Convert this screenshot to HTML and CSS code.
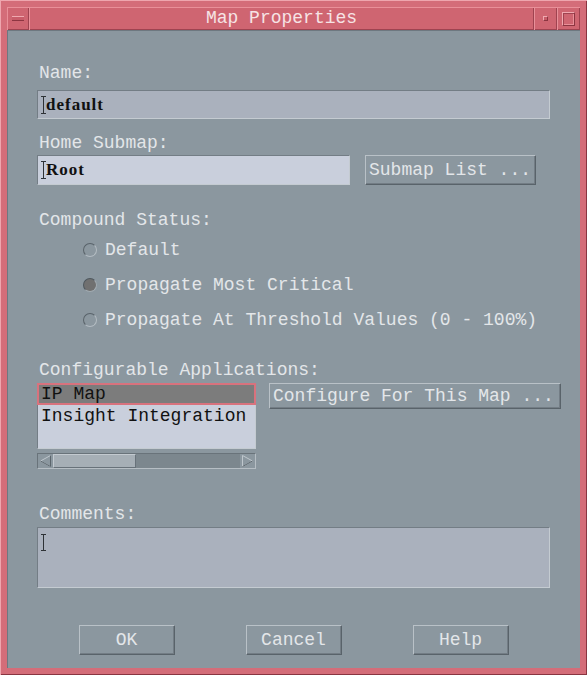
FILE: index.html
```html
<!DOCTYPE html>
<html>
    <head>
        <meta charset="utf-8">
        <title>Map Properties</title>
        <link rel="stylesheet" href="styles.css">
    </head>
    <body>
        <div class="window">
            <div class="titlebar">
                <div class="tb-btn menu"><span class="dash"></span></div>
                <div class="title">Map Properties</div>
                <div class="tb-btn min"><span class="pip"></span></div>
                <div class="tb-btn max"><span class="square"></span></div>
            </div>
            <div class="content">
                <div class="label first">Name:</div>
                <div class="field dark name">
                    <svg class="caret" width="5" height="18" viewBox="0 0 5 18"><path d="M0 .5h5M0 17.5h5M2.5 0v18" stroke="#2e3236" stroke-width="1" fill="none"/></svg>
                    <span>default</span>
                </div>

                <div class="label home">Home Submap:</div>
                <div class="row submap">
                    <div class="field light root">
                        <svg class="caret" width="5" height="18" viewBox="0 0 5 18"><path d="M0 .5h5M0 17.5h5M2.5 0v18" stroke="#2e3236" stroke-width="1" fill="none"/></svg>
                        <span>Root</span>
                    </div>
                    <button class="btn list-btn">Submap List ...</button>
                </div>

                <div class="label compound">Compound Status:</div>
                <div class="radios">
                    <div class="radio"><span class="circle"></span>Default</div>
                    <div class="radio"><span class="circle on"></span>Propagate Most Critical</div>
                    <div class="radio"><span class="circle"></span>Propagate At Threshold Values (0 - 100%)</div>
                </div>

                <div class="label apps">Configurable Applications:</div>
                <div class="row applist">
                    <div class="listbox">
                        <div class="item selected">IP Map</div>
                        <div class="item">Insight Integration</div>
                    </div>
                    <button class="btn config-btn">Configure For This Map ...</button>
                </div>
                <div class="scrollbar">
                    <span class="arrow">
                        <svg width="15" height="14" viewBox="0 0 15 14"><path d="M12.5 1.5L2.5 7l10 5.5z" fill="none" stroke="#bfc7cd" stroke-width="1"/><path d="M2.5 7l10 5.5V1.5" fill="none" stroke="#5b656c" stroke-width="1"/></svg>
                    </span>
                    <span class="thumb"></span>
                    <span class="trough"></span>
                    <span class="arrow">
                        <svg width="15" height="14" viewBox="0 0 15 14"><path d="M2.5 1.5L12.5 7l-10 5.5z" fill="none" stroke="#bfc7cd" stroke-width="1"/><path d="M12.5 7l-10 5.5" fill="none" stroke="#5b656c" stroke-width="1"/></svg>
                    </span>
                </div>

                <div class="label comments">Comments:</div>
                <div class="field dark notes">
                    <svg class="caret" width="5" height="17" viewBox="0 0 5 17"><path d="M0 .5h5M0 16.5h5M2.5 0v17" stroke="#2e3236" stroke-width="1" fill="none"/></svg>
                </div>

                <div class="actions">
                    <button class="btn action">OK</button>
                    <button class="btn action">Cancel</button>
                    <button class="btn action">Help</button>
                </div>
            </div>
        </div>
    </body>
</html>
```

FILE: styles.css
```css
body{
    margin: 0;
    background: #8b979f;
    font-family: "Liberation Mono", "DejaVu Sans Mono", monospace;
}
.window{
    width: 587px;
    height: 675px;
    box-sizing: border-box;
    padding: 7px;
    background: #d46d79;
    box-shadow: inset 1px 1px 0 #eea6ae, inset -1px -1px 0 #8a3541;
    display: flex;
    flex-direction: column;
}

/* title bar */
.titlebar{
    height: 23px;
    display: flex;
    background: #cf6571;
}
.tb-btn, .title{
    box-shadow: inset 1px 1px 0 #e99099, inset -1px -1px 0 #9f4350;
}
.tb-btn{
    width: 23px;
    display: flex;
    align-items: center;
    justify-content: center;
}
.menu{
    width: 22px;
}
.title{
    flex: 1;
    text-align: center;
    line-height: 23px;
    font-size: 18px;
    color: #f6e3e5;
}
.dash{
    width: 12px;
    height: 3px;
    background: #c85c69;
    border-top: 1px solid #f0a9b0;
    border-bottom: 1px solid #8d3541;
}
.pip{
    width: 3px;
    height: 3px;
    background: #c85c69;
    border: 1px solid;
    border-color: #f0a9b0 #8d3541 #8d3541 #f0a9b0;
}
.square{
    width: 11px;
    height: 12px;
    border: 1px solid;
    border-color: #f0a9b0 #8d3541 #8d3541 #f0a9b0;
    box-shadow: inset 1px 1px 0 #9f4350, inset -1px -1px 0 #e99099;
}

/* content */
.content{
    flex: 1;
    background: #8b979f;
    padding: 0 30px;
    box-shadow: inset 1px 1px 0 #6e7880;
}
.label{
    color: #e3e6e9;
    font-size: 18px;
    line-height: 20px;
    padding-left: 2px;
}
.first{ margin-top: 33px; }
.home{ margin-top: 14px; }
.compound{ margin-top: 25px; }
.apps{ margin-top: 30px; }
.comments{ margin-top: 35px; }

.field{
    box-sizing: border-box;
    display: flex;
    align-items: center;
    padding-left: 3px;
    border: 1px solid;
    border-color: #737d85 #c4cbd1 #c4cbd1 #737d85;
    font-family: "Liberation Serif", serif;
    font-weight: bold;
    font-size: 17px;
    letter-spacing: 1px;
    color: #111;
}
.field span{
    margin-left: 0;
}
.dark{ background: #aab1bd; }
.light{ background: #c9cfdc; }
.name{
    margin-top: 7px;
    height: 29px;
}
.row{
    display: flex;
    align-items: flex-start;
}
.submap{
    margin-top: 2px;
}
.root{
    flex: none;
    width: 313px;
    height: 30px;
}
.btn{
    box-sizing: border-box;
    background: #8b979f;
    border: 1px solid;
    border-color: #b9c1c7 #59636a #59636a #b9c1c7;
    box-shadow: inset -1px -1px 0 #737d85;
    color: #e3e6e9;
    font-family: "Liberation Mono", "DejaVu Sans Mono", monospace;
    font-size: 18px;
    padding: 0 0 0 3px;
    text-align: left;
    white-space: nowrap;
    flex: none;
}
.list-btn{
    margin-left: 15px;
    width: 171px;
    height: 30px;
}

/* radio group */
.radios{
    margin-top: 10px;
    margin-left: 46px;
    display: flex;
    flex-direction: column;
    gap: 15px;
}
.radio{
    display: flex;
    align-items: center;
    gap: 8px;
    height: 20px;
    color: #e3e6e9;
    font-size: 18px;
}
.circle{
    box-sizing: border-box;
    width: 14px;
    height: 14px;
    border-radius: 50%;
    border: 1.5px solid;
    border-color: #59636a #b3bcc2 #b3bcc2 #59636a;
}
.circle.on{
    background: #707070;
    border-color: #4f585e #a3acb2 #a3acb2 #4f585e;
}

/* application list */
.applist{
    margin-top: 3px;
}
.listbox{
    flex: none;
    box-sizing: border-box;
    width: 219px;
    height: 66px;
    background: #c9cfdc;
    border: 1px solid;
    border-color: #737d85 #c4cbd1 #c4cbd1 #737d85;
}
.item{
    height: 20px;
    line-height: 20px;
    padding-left: 3px;
    font-size: 18px;
    color: #111;
    white-space: nowrap;
}
.item.selected{
    background: #7c7c7c;
    box-shadow: 0 0 0 1px #d8727d, inset 0 0 0 1px #d8727d;
    margin-bottom: 2px;
}
.config-btn{
    margin-left: 13px;
    width: 292px;
    height: 26px;
}

.scrollbar{
    margin-top: 4px;
    width: 219px;
    height: 16px;
    box-sizing: border-box;
    display: flex;
    background: #7c878e;
    border: 1px solid;
    border-color: #69737a #b6bec4 #b6bec4 #69737a;
}
.arrow{
    width: 15px;
    display: flex;
    align-items: center;
    background: #8b979f;
}
.thumb{
    width: 83px;
    box-sizing: border-box;
    background: #a6afb6;
    border: 1px solid;
    border-color: #c3cad0 #68727a #68727a #c3cad0;
}
.trough{
    flex: 1;
}

.notes{
    margin-top: 3px;
    height: 61px;
    align-items: flex-start;
    padding-top: 6px;
}

/* bottom buttons */
.actions{
    margin-top: 37px;
    display: flex;
    justify-content: center;
    gap: 71px;
}
.action{
    width: 96px;
    height: 30px;
    padding: 0;
    text-align: center;
}
```
